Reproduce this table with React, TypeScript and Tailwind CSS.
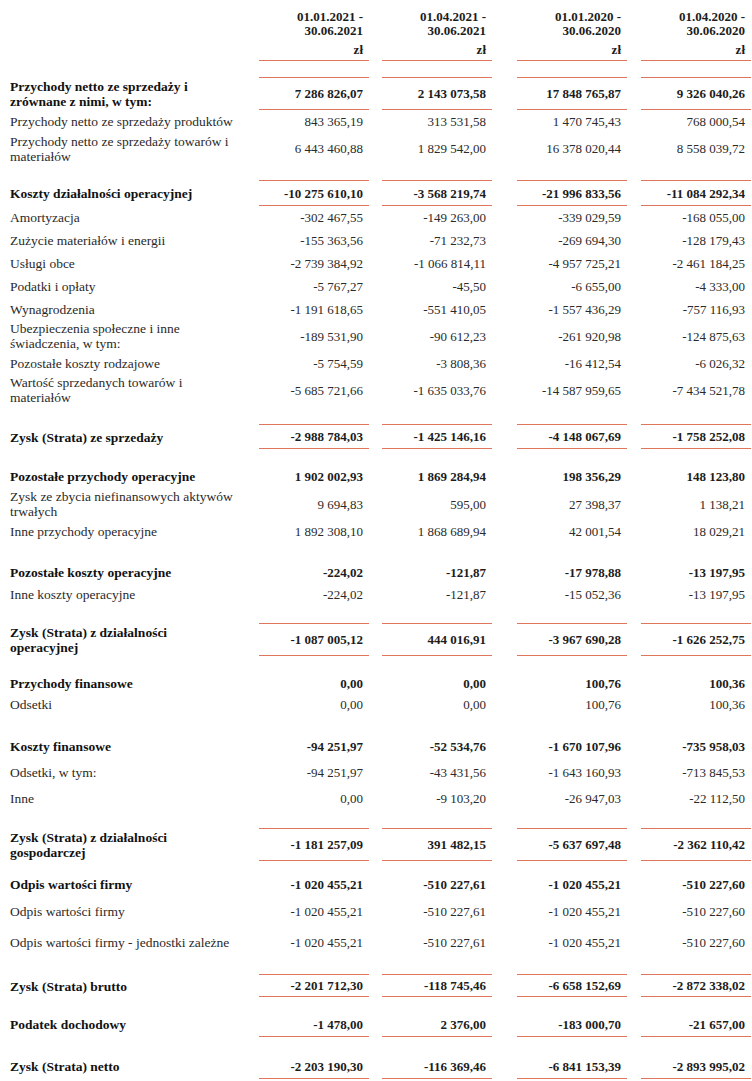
type Row = {
  label?: string;
  vals?: string[];
  bold?: boolean;
  h: number;
  bb?: boolean;
};

const rows: Row[] = [
  { h: 17, bb: true },
  { label: 'Przychody netto ze sprzedaży i zrównane z nimi, w tym:', vals: ['7 286 826,07', '2 143 073,58', '17 848 765,87', '9 326 040,26'], bold: true, h: 32, bb: true },
  { label: 'Przychody netto ze sprzedaży produktów', vals: ['843 365,19', '313 531,58', '1 470 745,43', '768 000,54'], h: 22 },
  { label: 'Przychody netto ze sprzedaży towarów i materiałów', vals: ['6 443 460,88', '1 829 542,00', '16 378 020,44', '8 558 039,72'], h: 33 },
  { h: 16, bb: true },
  { label: 'Koszty działalności operacyjnej', vals: ['-10 275 610,10', '-3 568 219,74', '-21 996 833,56', '-11 084 292,34'], bold: true, h: 25, bb: true },
  { label: 'Amortyzacja', vals: ['-302 467,55', '-149 263,00', '-339 029,59', '-168 055,00'], h: 23 },
  { label: 'Zużycie materiałów i energii', vals: ['-155 363,56', '-71 232,73', '-269 694,30', '-128 179,43'], h: 23 },
  { label: 'Usługi obce', vals: ['-2 739 384,92', '-1 066 814,11', '-4 957 725,21', '-2 461 184,25'], h: 23 },
  { label: 'Podatki i opłaty', vals: ['-5 767,27', '-45,50', '-6 655,00', '-4 333,00'], h: 23 },
  { label: 'Wynagrodzenia', vals: ['-1 191 618,65', '-551 410,05', '-1 557 436,29', '-757 116,93'], h: 22 },
  { label: 'Ubezpieczenia społeczne i inne świadczenia, w tym:', vals: ['-189 531,90', '-90 612,23', '-261 920,98', '-124 875,63'], h: 32 },
  { label: 'Pozostałe koszty rodzajowe', vals: ['-5 754,59', '-3 808,36', '-16 412,54', '-6 026,32'], h: 22 },
  { label: 'Wartość sprzedanych towarów i materiałów', vals: ['-5 685 721,66', '-1 635 033,76', '-14 587 959,65', '-7 434 521,78'], h: 32 },
  { h: 19, bb: true },
  { label: 'Zysk (Strata) ze sprzedaży', vals: ['-2 988 784,03', '-1 425 146,16', '-4 148 067,69', '-1 758 252,08'], bold: true, h: 24, bb: true },
  { h: 16 },
  { label: 'Pozostałe przychody operacyjne', vals: ['1 902 002,93', '1 869 284,94', '198 356,29', '148 123,80'], bold: true, h: 23 },
  { label: 'Zysk ze zbycia niefinansowych aktywów trwałych', vals: ['9 694,83', '595,00', '27 398,37', '1 138,21'], h: 32 },
  { label: 'Inne przychody operacyjne', vals: ['1 892 308,10', '1 868 689,94', '42 001,54', '18 029,21'], h: 22 },
  { h: 19 },
  { label: 'Pozostałe koszty operacyjne', vals: ['-224,02', '-121,87', '-17 978,88', '-13 197,95'], bold: true, h: 22 },
  { label: 'Inne koszty operacyjne', vals: ['-224,02', '-121,87', '-15 052,36', '-13 197,95'], h: 22 },
  { h: 19, bb: true },
  { label: 'Zysk (Strata) z działalności operacyjnej', vals: ['-1 087 005,12', '444 016,91', '-3 967 690,28', '-1 626 252,75'], bold: true, h: 32, bb: true },
  { h: 16 },
  { label: 'Przychody finansowe', vals: ['0,00', '0,00', '100,76', '100,36'], bold: true, h: 22 },
  { label: 'Odsetki', vals: ['0,00', '0,00', '100,76', '100,36'], h: 21 },
  { h: 18 },
  { label: 'Koszty finansowe', vals: ['-94 251,97', '-52 534,76', '-1 670 107,96', '-735 958,03'], bold: true, h: 26 },
  { label: 'Odsetki, w tym:', vals: ['-94 251,97', '-43 431,56', '-1 643 160,93', '-713 845,53'], h: 26 },
  { label: 'Inne', vals: ['0,00', '-9 103,20', '-26 947,03', '-22 112,50'], h: 26 },
  { h: 18, bb: true },
  { label: 'Zysk (Strata) z działalności gospodarczej', vals: ['-1 181 257,09', '391 482,15', '-5 637 697,48', '-2 362 110,42'], bold: true, h: 32, bb: true },
  { h: 11 },
  { label: 'Odpis wartości firmy', vals: ['-1 020 455,21', '-510 227,61', '-1 020 455,21', '-510 227,60'], bold: true, h: 25 },
  { label: 'Odpis wartości firmy', vals: ['-1 020 455,21', '-510 227,61', '-1 020 455,21', '-510 227,60'], h: 28 },
  { label: 'Odpis wartości firmy - jednostki zależne', vals: ['-1 020 455,21', '-510 227,61', '-1 020 455,21', '-510 227,60'], h: 34 },
  { h: 16, bb: true },
  { label: 'Zysk (Strata) brutto', vals: ['-2 201 712,30', '-118 745,46', '-6 658 152,69', '-2 872 338,02'], bold: true, h: 22, bb: true },
  { h: 15 },
  { label: 'Podatek dochodowy', vals: ['-1 478,00', '2 376,00', '-183 000,70', '-21 657,00'], bold: true, h: 25, bb: true },
  { h: 17 },
  { label: 'Zysk (Strata) netto', vals: ['-2 203 190,30', '-116 369,46', '-6 841 153,39', '-2 893 995,02'], bold: true, h: 25, bb: true },
];

const headers = [
  ['01.01.2021 -', '30.06.2021'],
  ['01.04.2021 -', '30.06.2021'],
  ['01.01.2020 -', '30.06.2020'],
  ['01.04.2020 -', '30.06.2020'],
];

const grid = 'grid grid-cols-[259px_123px_135px_124px_110px]';
const cell = 'w-[110px] pr-[6px] text-right';
const line = 'border-[#e0765c]';

export default function App() {
  return (
    <div className="w-[752px] bg-white text-[#1c1c1c] text-[13px] leading-[15px] font-[family-name:'Liberation_Serif','Times_New_Roman',serif]">
      <div className={grid}>
        <div />
        {headers.map((hd, i) => (
          <div key={i} className={`${cell} ${line} h-[61px] border-b pt-[10px] font-bold leading-[14px]`}>
            <div>{hd[0]}</div>
            <div>{hd[1]}</div>
            <div className="mt-[5px]">zł</div>
          </div>
        ))}
      </div>
      {rows.map((r, i) => (
        <div key={i} className={grid}>
          <div
            className={`flex items-center pl-[10px] pr-[23px] text-[13.5px] ${r.bold ? 'font-bold text-[#111]' : 'text-[#2a2a2a]'}`}
            style={{ height: r.h }}
          >
            {r.label}
          </div>
          {[0, 1, 2, 3].map((c) => (
            <div
              key={c}
              className={`${cell} ${line} flex items-center justify-end ${r.bb ? 'border-b' : ''} ${r.bold ? 'font-bold' : 'text-[#2a2a2a]'}`}
              style={{ height: r.h }}
            >
              {r.vals ? r.vals[c] : ''}
            </div>
          ))}
        </div>
      ))}
    </div>
  );
}
